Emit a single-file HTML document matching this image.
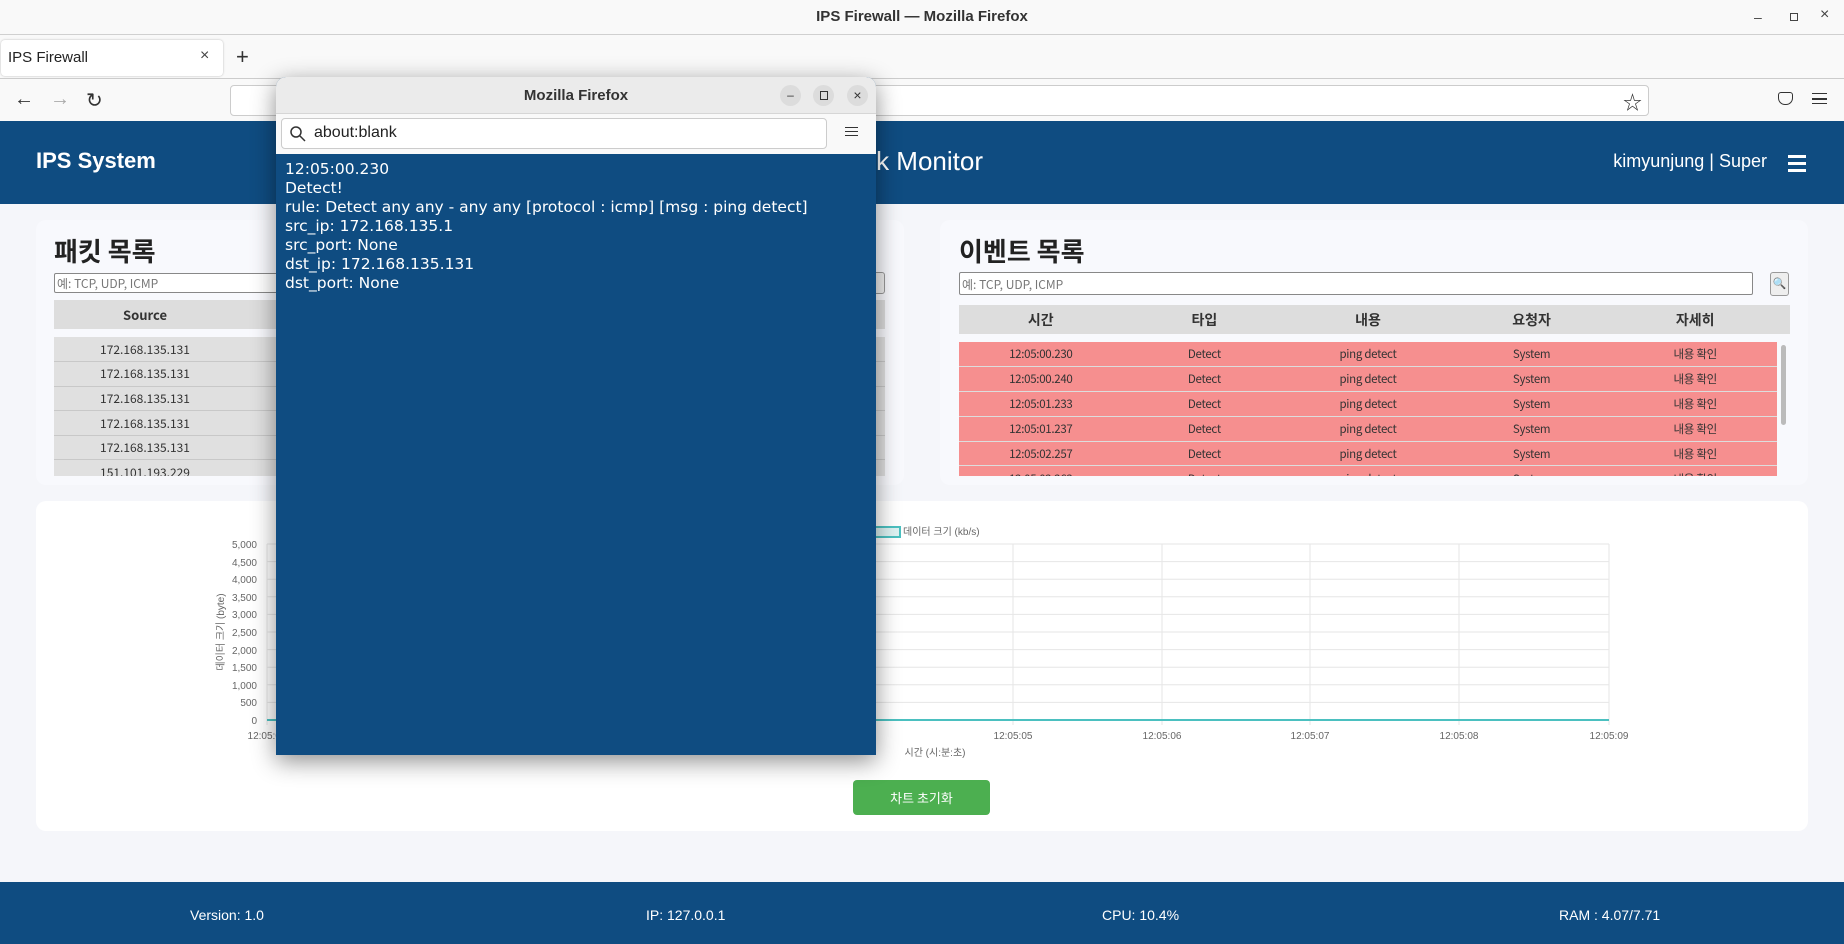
<!DOCTYPE html>
<html><head><meta charset="utf-8">
<style>
*{box-sizing:border-box;margin:0;padding:0}
body{width:1844px;height:944px;position:relative;overflow:hidden;background:#f5f6fa;font-family:"Liberation Sans","Noto Sans CJK KR",sans-serif;}
.a{position:absolute}
.k{font-family:"Noto Sans CJK KR","Liberation Sans",sans-serif}
table{border-collapse:collapse;table-layout:fixed}
td,th{text-align:center;overflow:hidden;white-space:nowrap}
</style></head><body>
<!-- title bar -->
<div class="a" style="left:0;top:0;width:1844px;height:35px;background:#f9f9f9;border-bottom:1px solid #d0d0d0"></div>
<div class="a" style="left:0;top:8px;width:1844px;text-align:center;font-size:15px;font-weight:bold;color:#333">IPS Firewall — Mozilla Firefox</div>
<div class="a" style="left:1754px;top:9px;font-size:14px;color:#444">–</div>
<div class="a" style="left:1790px;top:13px;width:8px;height:8px;border:1px solid #444"></div>
<div class="a" style="left:1820px;top:6px;font-size:16px;color:#444">×</div>
<!-- tab bar -->
<div class="a" style="left:0;top:35px;width:1844px;height:44px;background:#f9f9f9;border-bottom:1px solid #ccc"></div>
<div class="a" style="left:1px;top:40px;width:222px;height:36px;background:#fff;border-radius:4px;box-shadow:0 0 2px #bbb"></div>
<div class="a" style="left:8px;top:49px;font-size:15px;color:#222">IPS Firewall</div>
<div class="a" style="left:200px;top:47px;font-size:16px;color:#444">×</div>
<div class="a" style="left:236px;top:44px;font-size:22px;color:#333">+</div>
<!-- nav bar -->
<div class="a" style="left:0;top:79px;width:1844px;height:42px;background:#f9f9f9"></div>
<div class="a" style="left:14px;top:88px;font-size:20px;color:#333">←</div>
<div class="a" style="left:50px;top:88px;font-size:20px;color:#aaa">→</div>
<div class="a" style="left:86px;top:88px;font-size:20px;color:#333">↻</div>
<div class="a" style="left:230px;top:85px;width:1419px;height:31px;background:#fff;border:1px solid #ccc;border-radius:4px"></div>
<div class="a" style="left:1623px;top:88px;font-size:19px;color:#333">☆</div>
<div class="a" style="left:1778px;top:92px;width:15px;height:13px;border:1.5px solid #333;border-radius:3px 3px 7px 7px"></div>
<div class="a" style="left:1812px;top:93px;width:15px;height:11px;border-top:1.5px solid #333;border-bottom:1.5px solid #333"></div>
<div class="a" style="left:1812px;top:98px;width:15px;height:1.5px;background:#333"></div>
<!-- header -->
<div class="a" style="left:0;top:121px;width:1844px;height:83px;background:#0f4c81"></div>
<div class="a" style="left:36px;top:148px;font-size:22px;font-weight:bold;color:#fff">IPS System</div>
<div class="a" style="left:600px;top:146px;width:383px;text-align:right;font-size:26px;color:#fff">IPS Network Monitor</div>
<div class="a" style="left:1500px;top:151px;width:267px;text-align:right;font-size:18px;color:#fff;white-space:nowrap">kimyunjung | Super</div>
<div class="a" style="left:1788px;top:155px;width:18px;height:3px;background:#fff"></div>
<div class="a" style="left:1788px;top:162px;width:18px;height:3px;background:#fff"></div>
<div class="a" style="left:1788px;top:169px;width:18px;height:3px;background:#fff"></div>
<!-- left card -->
<div class="a" style="left:36px;top:220px;width:868px;height:265px;background:#f8f9fd;border-radius:10px"></div>
<div class="a k" style="left:54px;top:232px;font-size:26px;font-weight:bold;color:#222">패킷 목록</div>
<div class="a k" style="left:54px;top:273px;width:810px;height:20px;background:#fff;border:1px solid #888;border-radius:2px;font-size:12px;color:#777;padding:1px 2px">예: TCP, UDP, ICMP</div>
<div class="a" style="left:868px;top:272px;width:17px;height:22px;background:#eee;border:1px solid #999;border-radius:3px"></div>
<div class="a" style="left:54px;top:300px;width:831px;height:29px;background:#ddd"></div>
<div class="a k" style="left:54px;top:305px;width:182px;text-align:center;font-size:13px;font-weight:bold;color:#333">Source</div>
<div class="a" style="left:54px;top:337px;width:831px;height:139px;overflow:hidden;background:#e0e0e0">
<table style="width:831px;font-size:12px;color:#333" class="k">
<tr style="height:24.6px;border-bottom:1px solid #c8c8c8"><td style="width:182px">172.168.135.131</td><td>172.168.135.1</td></tr>
<tr style="height:24.6px;border-bottom:1px solid #c8c8c8"><td>172.168.135.131</td><td>172.168.135.1</td></tr>
<tr style="height:24.6px;border-bottom:1px solid #c8c8c8"><td>172.168.135.131</td><td>151.101.193.229</td></tr>
<tr style="height:24.6px;border-bottom:1px solid #c8c8c8"><td>172.168.135.131</td><td>172.168.135.1</td></tr>
<tr style="height:24.6px;border-bottom:1px solid #c8c8c8"><td>172.168.135.131</td><td>172.168.135.1</td></tr>
<tr style="height:24.6px"><td>151.101.193.229</td><td>172.168.135.131</td></tr>
</table></div>
<!-- right card -->
<div class="a" style="left:940px;top:220px;width:868px;height:265px;background:#f8f9fd;border-radius:10px"></div>
<div class="a k" style="left:959px;top:232px;font-size:26px;font-weight:bold;color:#222">이벤트 목록</div>
<div class="a k" style="left:959px;top:272px;width:794px;height:23px;background:#fff;border:1px solid #888;border-radius:2px;font-size:12px;color:#777;padding:3px 2px">예: TCP, UDP, ICMP</div>
<div class="a" style="left:1770px;top:272px;width:19px;height:24px;background:#eee;border:1px solid #999;border-radius:3px;font-size:11px;text-align:center;padding-top:4px;color:#468">&#128269;</div>
<div class="a" style="left:959px;top:305px;width:831px;height:29px;background:#ddd"></div>
<table class="a k" style="left:959px;top:305px;width:818px;height:29px;font-size:14px;font-weight:bold;color:#333"><tr><td>시간</td><td>타입</td><td>내용</td><td>요청자</td><td>자세히</td></tr></table>
<div class="a" style="left:959px;top:342px;width:818px;height:134px;overflow:hidden;background:#f68f8f">
<table class="k" style="width:818px;font-size:11.5px;color:#333;letter-spacing:-0.3px">
<tr style="height:24.8px;border-bottom:1.5px solid #ddd"><td>12:05:00.230</td><td>Detect</td><td>ping detect</td><td>System</td><td>내용 확인</td></tr>
<tr style="height:24.8px;border-bottom:1.5px solid #ddd"><td>12:05:00.240</td><td>Detect</td><td>ping detect</td><td>System</td><td>내용 확인</td></tr>
<tr style="height:24.8px;border-bottom:1.5px solid #ddd"><td>12:05:01.233</td><td>Detect</td><td>ping detect</td><td>System</td><td>내용 확인</td></tr>
<tr style="height:24.8px;border-bottom:1.5px solid #ddd"><td>12:05:01.237</td><td>Detect</td><td>ping detect</td><td>System</td><td>내용 확인</td></tr>
<tr style="height:24.8px;border-bottom:1.5px solid #ddd"><td>12:05:02.257</td><td>Detect</td><td>ping detect</td><td>System</td><td>내용 확인</td></tr>
<tr style="height:24.8px"><td>12:05:02.263</td><td>Detect</td><td>ping detect</td><td>System</td><td>내용 확인</td></tr>
</table></div>
<div class="a" style="left:1781px;top:345px;width:5px;height:80px;background:#bbb;border-radius:3px"></div>
<!-- chart card -->
<div class="a" style="left:36px;top:501px;width:1772px;height:330px;background:#fff;border-radius:10px"></div>
<svg class="a" style="left:0;top:0" width="1844" height="944">
<g stroke="#e6e6e6" stroke-width="1">
<line x1="267" y1="544" x2="1609" y2="544"/><line x1="267" y1="561.6" x2="1609" y2="561.6"/><line x1="267" y1="579.2" x2="1609" y2="579.2"/><line x1="267" y1="596.8" x2="1609" y2="596.8"/><line x1="267" y1="614.4" x2="1609" y2="614.4"/><line x1="267" y1="632" x2="1609" y2="632"/><line x1="267" y1="649.6" x2="1609" y2="649.6"/><line x1="267" y1="667.2" x2="1609" y2="667.2"/><line x1="267" y1="684.8" x2="1609" y2="684.8"/><line x1="267" y1="702.4" x2="1609" y2="702.4"/>
<line x1="1013" y1="544" x2="1013" y2="725"/><line x1="1162" y1="544" x2="1162" y2="725"/><line x1="1310" y1="544" x2="1310" y2="725"/><line x1="1459" y1="544" x2="1459" y2="725"/><line x1="1609" y1="544" x2="1609" y2="725"/><line x1="267" y1="544" x2="267" y2="725"/>
</g>
<line x1="267" y1="720" x2="1609" y2="720" stroke="#4bc0c0" stroke-width="2"/>
<rect x="860" y="527" width="40" height="10" fill="#ddf2f2" stroke="#4bc0c0" stroke-width="2"/>
<g font-family="Liberation Sans,Noto Sans CJK KR,sans-serif" font-size="10" fill="#666">
<text x="903" y="535">데이터 크기 (kb/s)</text>
<g text-anchor="end"><text x="257" y="548">5,000</text><text x="257" y="566">4,500</text><text x="257" y="583">4,000</text><text x="257" y="601">3,500</text><text x="257" y="618">3,000</text><text x="257" y="636">2,500</text><text x="257" y="654">2,000</text><text x="257" y="671">1,500</text><text x="257" y="689">1,000</text><text x="257" y="706">500</text><text x="257" y="724">0</text></g>
<g text-anchor="middle"><text x="267" y="739">12:05:00</text><text x="1013" y="739">12:05:05</text><text x="1162" y="739">12:05:06</text><text x="1310" y="739">12:05:07</text><text x="1459" y="739">12:05:08</text><text x="1609" y="739">12:05:09</text>
<text x="935" y="756">시간 (시:분:초)</text>
<text transform="translate(224,632) rotate(-90)">데이터 크기 (byte)</text></g>
</g></svg>
<div class="a k" style="left:853px;top:780px;width:137px;height:35px;background:#4caf50;border-radius:4px;color:#fff;font-size:13px;text-align:center;line-height:35px">차트 초기화</div>
<!-- footer -->
<div class="a" style="left:0;top:882px;width:1844px;height:62px;background:#0f4c81"></div>
<div class="a" style="left:190px;top:907px;font-size:14px;color:#fff">Version: 1.0</div>
<div class="a" style="left:646px;top:907px;font-size:14px;color:#fff">IP: 127.0.0.1</div>
<div class="a" style="left:1102px;top:907px;font-size:14px;color:#fff">CPU: 10.4%</div>
<div class="a" style="left:1559px;top:907px;font-size:14px;color:#fff">RAM : 4.07/7.71</div>
<!-- popup -->
<div class="a" style="left:276px;top:77px;width:600px;height:678px;background:#0f4c81;border-radius:10px 10px 0 0;box-shadow:0 6px 24px rgba(0,0,0,.45);overflow:hidden">
<div style="height:37px;background:#ebebeb;border-bottom:1px solid #d6d6d6;text-align:center;font-size:15px;font-weight:bold;color:#333;line-height:37px">Mozilla Firefox</div>
<div style="position:absolute;left:504px;top:8px;width:21px;height:21px;border-radius:50%;background:#dcdcdc;text-align:center;font-size:12px;line-height:21px;color:#333">–</div>
<div style="position:absolute;left:537px;top:8px;width:21px;height:21px;border-radius:50%;background:#dcdcdc"><div style="margin:6px 7px;width:8px;height:9px;border:1.3px solid #333"></div></div>
<div style="position:absolute;left:571px;top:8px;width:21px;height:21px;border-radius:50%;background:#dcdcdc;text-align:center;font-size:14px;line-height:20px;color:#333">×</div>
<div style="height:40px;background:#f9f9f9;position:relative">
<div style="position:absolute;left:5px;top:4px;width:546px;height:31px;background:#fff;border:1px solid #ccc;border-radius:4px;font-size:16px;color:#222;padding:5px 0 0 32px">about:blank</div>
<svg style="position:absolute;left:14px;top:12px" width="16" height="16"><circle cx="6" cy="6" r="5" fill="none" stroke="#333" stroke-width="1.5"/><line x1="10" y1="10" x2="15" y2="15" stroke="#333" stroke-width="1.5"/></svg>
<div style="position:absolute;left:569px;top:13px;width:13px;height:9px;border-top:1.3px solid #333;border-bottom:1.3px solid #333"></div>
<div style="position:absolute;left:569px;top:17px;width:13px;height:1.3px;background:#333"></div>
</div>
<div style="padding:6px 0 0 9px;color:#fff;font-family:'DejaVu Sans',sans-serif;font-size:15.5px;line-height:19px">12:05:00.230<br>Detect!<br>rule: Detect any any - any any [protocol : icmp] [msg : ping detect]<br>src_ip: 172.168.135.1<br>src_port: None<br>dst_ip: 172.168.135.131<br>dst_port: None</div>
</div>
</body></html>
